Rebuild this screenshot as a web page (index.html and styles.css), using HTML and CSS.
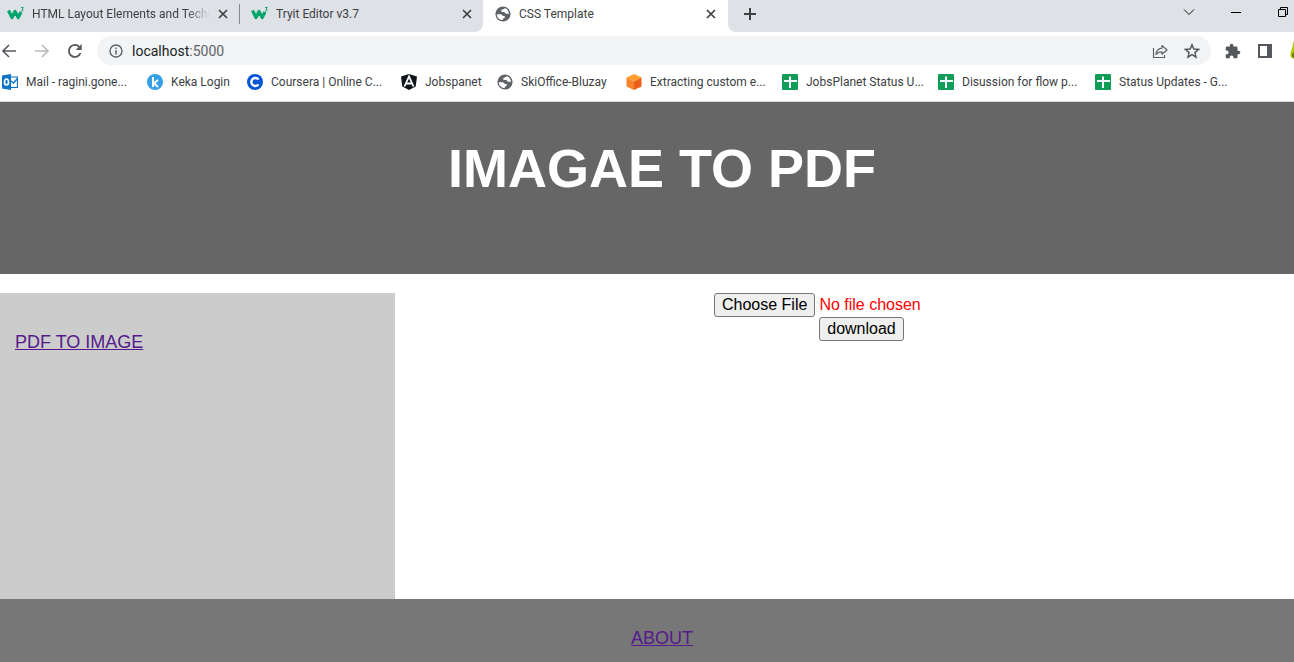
FILE: index.html
```html
<!DOCTYPE html>
<html lang="en">
<head>
<meta charset="utf-8">
<meta name="viewport" content="width=device-width, initial-scale=1">
<title>CSS Template</title>
<link rel="stylesheet" href="styles.css">
</head>
<body>
<svg class="defs" aria-hidden="true">
  <symbol id="globe" viewBox="0 0 16 16">
    <circle cx="8" cy="8" r="7.600" fill="#5f6368"/>
    <path d="M1.900 8.200h3.600c1.400 0 1.600 1.700 2.900 1.700h1.300v1.300c0 1-.8 1.300-1.900 1.300v1.500C4.300 14 1.700 11.300 1.900 8.200z" fill="#fff"/>
    <path d="M9.600 2.100c0 1.100-.9 1.300-2 1.300-.9 0-1.300.5-1.300 1.300s.5 1.200 1.300 1.200h1.600c1 0 .9 1.800 2.100 1.800h2.700c-.2-2.800-1.900-4.900-4.400-5.600z" fill="#fff"/>
  </symbol>
  <symbol id="w3" viewBox="0 0 18 16">
    <path d="M1.500 4.500 5 11.500 8 5.500l3.200 6L14 6" fill="none" stroke="#04a56d" stroke-width="3.200" stroke-linejoin="round"/>
    <path d="M14 1.500h2.200L15 3c1.900.1 1.600 2.400-.8 1.900" fill="none" stroke="#04a56d"/>
  </symbol>
  <symbol id="close" viewBox="0 0 12 12">
    <path d="m2 2 8 8M10 2 2 10" fill="none" stroke="#3c4043" stroke-width="1.700"/>
  </symbol>
  <symbol id="sheet" viewBox="0 0 16 16">
    <rect width="16" height="16" rx="1" fill="#0f9d58"/>
    <path d="M2 7h13M8 2.500v11.500" stroke="#fff" stroke-width="2"/>
  </symbol>
</svg>

<div class="browser">
  <div class="tabs">
    <div class="tab tab-first">
      <svg class="w3"><use href="#w3"/></svg>
      <span class="tab-title fade">HTML Layout Elements and Techn</span>
      <button class="close" aria-label="Close tab"><svg><use href="#close"/></svg></button>
    </div>
    <div class="tab tab-second">
      <svg class="w3"><use href="#w3"/></svg>
      <span class="tab-title">Tryit Editor v3.7</span>
      <button class="close" aria-label="Close tab"><svg><use href="#close"/></svg></button>
    </div>
    <div class="tab tab-active">
      <svg class="icon"><use href="#globe"/></svg>
      <span class="tab-title">CSS Template</span>
      <button class="close" aria-label="Close tab"><svg><use href="#close"/></svg></button>
    </div>
    <div class="tab-rest">
      <button class="new-tab" aria-label="New tab"><svg viewBox="0 0 14 14"><path d="M7 1v12M1 7h12" stroke="#3c4043" stroke-width="2"/></svg></button>
      <div class="window-buttons">
        <button aria-label="Search tabs"><svg viewBox="0 0 12 12"><path d="m1 3.500 5 5 5-5" fill="none" stroke="#111"/></svg></button>
        <button aria-label="Minimize"><svg viewBox="0 0 12 12"><path d="M1 6.500h10" stroke="#000"/></svg></button>
        <button aria-label="Restore"><svg viewBox="0 0 12 12"><path d="M1.500 3.500h7v7h-7zM3.500 3.500v-2h7v7h-2" fill="none" stroke="#000"/></svg></button>
      </div>
    </div>
  </div>

  <div class="toolbar">
    <div class="nav">
      <button aria-label="Back"><svg viewBox="0 0 16 16"><path d="M15 8H2.500M8 2 2 8l6 6" fill="none" stroke="#54585d" stroke-width="1.600"/></svg></button>
      <button aria-label="Forward"><svg viewBox="0 0 16 16"><path d="M1 8h12.500M8 2l6 6-6 6" fill="none" stroke="#b8babd" stroke-width="1.600"/></svg></button>
      <button aria-label="Reload"><svg viewBox="0 0 16 16"><path d="M13.500 10A6 6 0 1 1 12.400 4" fill="none" stroke="#54585d" stroke-width="1.800"/><path d="M14.700 1v6H8.700z" fill="#54585d"/></svg></button>
    </div>
    <div class="address">
      <svg class="info" viewBox="0 0 14 14"><circle cx="7" cy="7" r="6" fill="none" stroke="#5f6368" stroke-width="1.400"/><path d="M7 6v4.500M7 3.500v1.500" stroke="#5f6368" stroke-width="1.500"/></svg>
      <span class="url">localhost<span class="port">:5000</span></span>
      <button aria-label="Share"><svg viewBox="0 0 16 16"><path d="M1.500 5v9.500h11V12" fill="none" stroke="#5f6368" stroke-width="1.200"/><path d="M10 2.500 15 7l-5 4.300V8.800c-2.500 0-4.500.7-6 2.700.4-3.600 2.600-6 6-6.300z" fill="none" stroke="#5f6368" stroke-width="1.200" stroke-linejoin="round"/></svg></button>
      <button aria-label="Bookmark"><svg viewBox="0 0 16 16"><path d="m8 1.800 1.800 4.300 4.700.4-3.600 3.100 1.100 4.600L8 11.700l-4 2.500 1.100-4.600L1.500 6.500l4.700-.4z" fill="none" stroke="#54585d" stroke-width="1.500"/></svg></button>
    </div>
    <div class="extensions">
      <button aria-label="Extensions"><svg viewBox="1 0 23 23"><path fill="#54585d" d="M20.500 11H19V7c0-1.100-.9-2-2-2h-4V3.500C13 2.120 11.880 1 10.500 1S8 2.120 8 3.500V5H4c-1.100 0-1.990.9-1.990 2v3.800H3.500c1.490 0 2.700 1.210 2.700 2.700s-1.210 2.700-2.700 2.700H2V20c0 1.100.9 2 2 2h3.800v-1.500c0-1.490 1.210-2.700 2.700-2.700s2.700 1.210 2.700 2.700V22H17c1.100 0 2-.9 2-2v-4h1.500c1.380 0 2.500-1.120 2.500-2.500S21.880 11 20.500 11z"/></svg></button>
      <button aria-label="Side panel"><svg viewBox="0 0 16 16"><path d="M2 2h12v12H2z" fill="none" stroke="#54585d" stroke-width="2"/><path d="M10 2h4v12h-4z" fill="#54585d"/></svg></button>
      <button class="profile" aria-label="Profile"><svg viewBox="0 0 5 24"><path d="M5 1Q4 5 3 9q-3 8 0 10l2 1z" fill="#b5c900"/><path d="M5 13q-3 2-2 5l2 1z" fill="#6c7e08"/></svg></button>
    </div>
  </div>

  <nav class="bookmarks" aria-label="Bookmarks">
    <a href="#"><svg class="icon" viewBox="0 0 16 16"><path d="M8 3h7.500v10.500H8z" fill="#fff" stroke="#0a72c7" stroke-width="1.200"/><path d="m9 7 2.500 2L15.500 4.500" fill="none" stroke="#0a72c7" stroke-width="1.400"/><path d="M0 1.500 9 0v16l-9-1.500z" fill="#0a72c7"/><ellipse cx="4.500" cy="8" rx="2" ry="3" fill="none" stroke="#fff" stroke-width="1.700"/></svg>Mail - ragini.gone...</a>
    <a href="#"><svg class="icon" viewBox="0 0 16 16"><circle cx="8" cy="8" r="8" fill="#35a0e8"/><path d="M6 3v10M11 6 7 9.300l4 3.700" fill="none" stroke="#fff" stroke-width="2"/></svg>Keka Login</a>
    <a href="#"><svg class="icon" viewBox="0 0 16 16"><circle cx="8" cy="8" r="8" fill="#0056d2"/><path d="M11.500 5.600a4 4 0 1 0 0 4.800" fill="none" stroke="#fff" stroke-width="2.400"/></svg>Coursera | Online C...</a>
    <a href="#"><svg class="icon" viewBox="0 0 16 16"><path d="m8 0 8 2.500-1.300 10L8 16l-6.700-3.500L0 2.500z" fill="#11151b"/><path d="M3.500 12.500 8 2.500l4.500 10M5.500 9.500h5" fill="none" stroke="#fff" stroke-width="1.800"/></svg>Jobspanet</a>
    <a href="#"><svg class="icon"><use href="#globe"/></svg>SkiOffice-Bluzay</a>
    <a href="#"><svg class="icon" viewBox="0 0 16 16"><path d="m8 0 7.500 3.500L8 7.500.5 3.500z" fill="#ff9d2e"/><path d="M.5 3.500 8 7.500V16L.5 12.500z" fill="#f9812a"/><path d="M15.500 3.500 8 7.500V16l7.500-3.500z" fill="#ef5f1c"/></svg>Extracting custom e...</a>
    <a href="#"><svg class="icon"><use href="#sheet"/></svg>JobsPlanet Status U...</a>
    <a href="#"><svg class="icon"><use href="#sheet"/></svg>Disussion for flow p...</a>
    <a href="#"><svg class="icon"><use href="#sheet"/></svg>Status Updates - G...</a>
  </nav>
</div>

<header class="banner"><h1>IMAGAE TO PDF</h1></header>
<main class="content">
  <aside class="sidebar"><a href="#">PDF TO IMAGE</a></aside>
  <form class="converter">
    <input class="file" type="file" aria-label="Image file">
    <button class="download" type="button">download</button>
  </form>
</main>
<footer class="footer"><a href="#">ABOUT</a></footer>
</body>
</html>
```
FILE: styles.css
```css
* { box-sizing: border-box; }

body {
  margin: 0;
  min-height: 100vh;
  display: flex;
  flex-direction: column;
  overflow: hidden;
  background: #fff;
  font-family: "Liberation Sans", Arial, sans-serif;
}

.defs { position: absolute; width: 0; height: 0; }

.browser {
  font: 12px/16px Roboto, "Noto Sans", sans-serif;
  color: #3c4043;
  border-bottom: 1px solid #d8d8d8;
}

.browser button {
  display: grid;
  place-items: center;
  flex: none;
  padding: 0;
  border: 0;
  background: none;
}

.browser svg { display: block; flex: none; }
.icon { width: 16px; height: 16px; }

/* Tab strip */
.tabs { display: flex; height: 32px; background: #fff; }

.tab {
  display: flex;
  align-items: center;
  padding-bottom: 4px;
  background: #dee1e6;
}

.tab-first { width: 239px; padding-left: 7px; padding-right: 10px; }
.tab-second { width: 244px; padding-left: 12px; padding-right: 10px; border-bottom-right-radius: 8px; }
.tab-second::before { content: ""; width: 1px; height: 20px; margin-left: -12px; margin-right: 11px; background: #85888d; }
.tab-active { width: 245px; padding-left: 12px; padding-right: 11px; background: #fff; }
.tab-active .icon { margin-right: 8px; }
.w3 { width: 18px; height: 16px; margin-right: 7px; }

.tab-title { flex: 1; min-width: 0; overflow: hidden; white-space: nowrap; }
.fade { margin-right: 7px; -webkit-mask-image: linear-gradient(to left, transparent, #000 24px); mask-image: linear-gradient(to left, transparent, #000 24px); }

.close, .close svg { width: 12px; height: 12px; }

.tab-rest {
  flex: 1;
  display: flex;
  justify-content: space-between;
  align-items: center;
  padding: 0 5px 4px 15px;
  background: #dee1e6;
  border-bottom-left-radius: 8px;
}

.new-tab svg { width: 14px; height: 14px; }
.window-buttons { display: flex; gap: 35px; padding-bottom: 4px; }
.window-buttons svg { width: 12px; height: 12px; }

/* Toolbar */
.toolbar { display: flex; align-items: center; padding-top: 4px; }
.nav { display: flex; gap: 17px; padding-left: 1px; margin-right: 14px; }
.nav svg { width: 16px; height: 16px; }

.address {
  flex: 1;
  display: flex;
  align-items: center;
  gap: 16px;
  height: 29px;
  padding: 0 11px 0 12px;
  border-radius: 15px;
  background: #f1f3f4;
}

.address button svg, .extensions svg { width: 16px; height: 16px; }
.info { width: 14px; height: 14px; margin-right: -7px; }
.url { flex: 1; font-size: 14px; color: #202124; }
.port { color: #5f6368; }
.extensions { display: flex; align-items: center; gap: 16px; padding-left: 14px; }
.extensions .profile svg { width: 5px; height: 24px; }

/* Bookmarks bar */
.bookmarks {
  display: grid;
  grid-template-columns: 145px 100px 154px 96px 129px 156px 156px 157px 1fr;
  padding: 9px 0 11px 2px;
}

.bookmarks a {
  display: flex;
  align-items: center;
  gap: 8px;
  color: #3c4043;
  text-decoration: none;
  white-space: nowrap;
}

/* Page */
.banner {
  height: 172px;
  padding: 34px 0 0 30px;
  background: #666;
  color: #fff;
  text-align: center;
}

.banner h1 { margin: 0; font-size: 54px; line-height: 64px; }

.content { flex: 1; display: flex; padding-top: 19px; }

.sidebar {
  flex: 0 0 395px;
  min-height: 306px;
  padding: 38px 15px;
  background: #ccc;
}

.sidebar a, .footer a { font-size: 18px; line-height: 22px; color: #551a8b; }

.converter {
  flex: 1;
  display: flex;
  flex-direction: column;
  align-items: center;
  padding-left: 34px;
}

.file { width: 295px; font: 16px/18px "Liberation Sans", Arial, sans-serif; color: #f00; }

.file::file-selector-button, .download {
  height: 24px;
  padding: 1px 7px;
  border: 1px solid #767676;
  border-radius: 3px;
  background: #efefef;
  color: #000;
  font: 16px/18px "Liberation Sans", Arial, sans-serif;
}

.footer {
  padding: 28px 0 13px 30px;
  background: #777;
  text-align: center;
  line-height: 22px;
}
```
